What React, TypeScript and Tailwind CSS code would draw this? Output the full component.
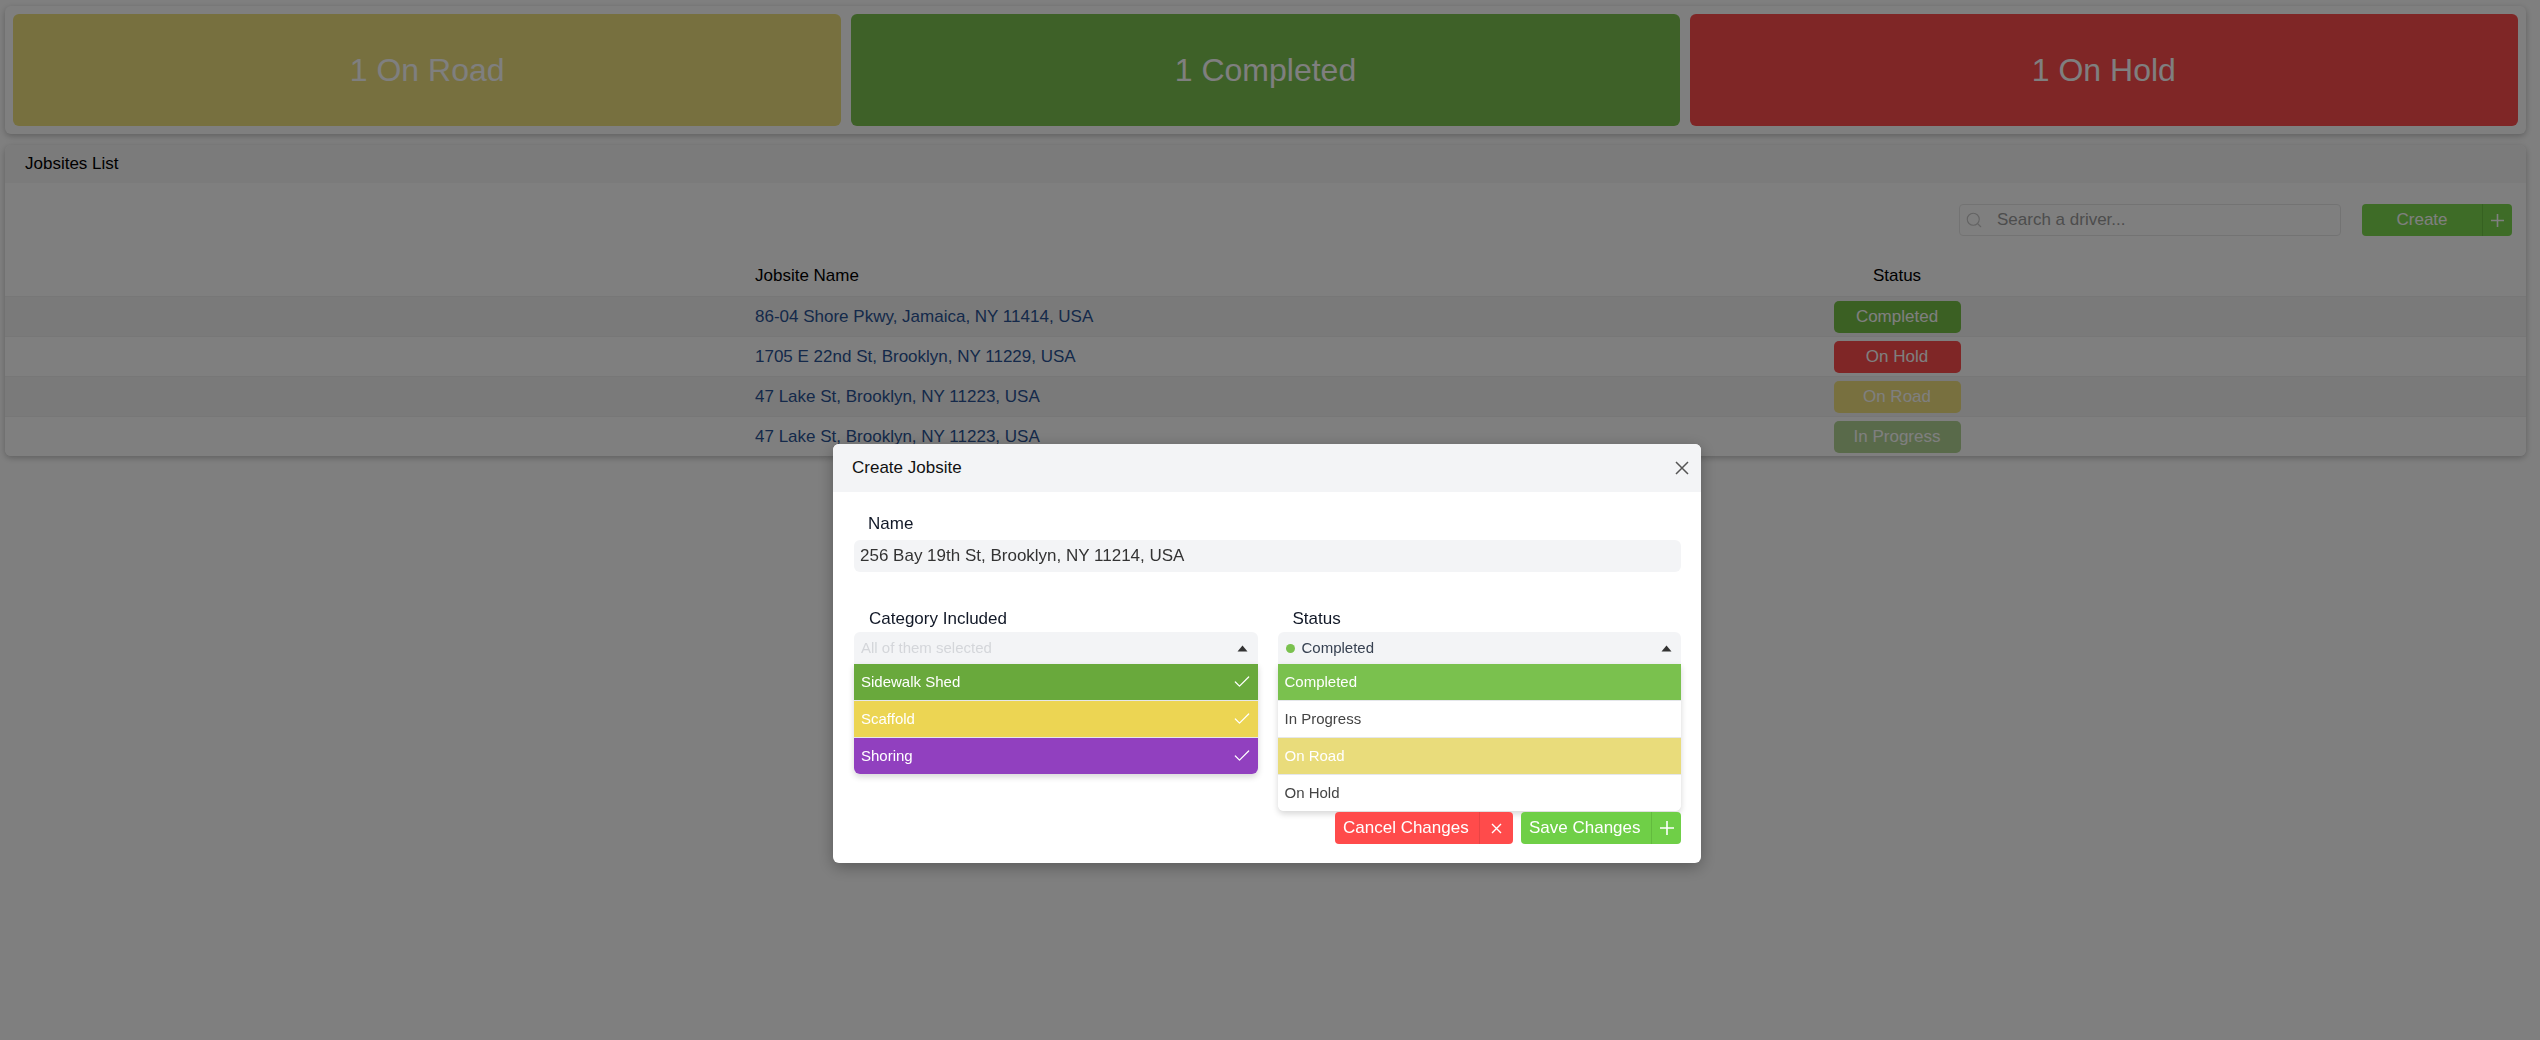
import { Check, Search } from 'lucide-react';

const SUMMARY = [
  { label: '1 On Road', color: 'bg-[#eee07e]' },
  { label: '1 Completed', color: 'bg-[#7cc250]' },
  { label: '1 On Hold', color: 'bg-[#fe4c4c]' },
];

const JOBSITES = [
  { name: '86-04 Shore Pkwy, Jamaica, NY 11414, USA', status: 'Completed', badge: 'bg-[#77c047]' },
  { name: '1705 E 22nd St, Brooklyn, NY 11229, USA', status: 'On Hold', badge: 'bg-[#fe4c4c]' },
  { name: '47 Lake St, Brooklyn, NY 11223, USA', status: 'On Road', badge: 'bg-[#f0e07e]' },
  { name: '47 Lake St, Brooklyn, NY 11223, USA', status: 'In Progress', badge: 'bg-[#b2d494]' },
];

const CATEGORIES = [
  { name: 'Sidewalk Shed', color: 'bg-[#69a93c]' },
  { name: 'Scaffold', color: 'bg-[#ecd553]' },
  { name: 'Shoring', color: 'bg-[#9140bf]' },
];

const STATUSES = [
  { name: 'Completed', color: 'bg-[#7ac14e] text-white' },
  { name: 'In Progress', color: 'bg-white text-[#444]' },
  { name: 'On Road', color: 'bg-[#e9dc7b] text-white' },
  { name: 'On Hold', color: 'bg-white text-[#444]' },
];

function CaretUp() {
  return (
    <svg width="11" height="7" viewBox="0 0 11 7" className="text-[#333]">
      <path d="M5.5 0.5 L10.5 6.5 L0.5 6.5 Z" fill="currentColor" strokeLinejoin="round" />
    </svg>
  );
}

function SummaryPanel() {
  return (
    <div className="grid grid-cols-3 gap-[10px] rounded-md bg-white p-[8px] shadow-[0_2px_6px_rgba(0,0,0,0.25)]">
      {SUMMARY.map((s) => (
        <div
          key={s.label}
          className={`flex h-[112px] items-center justify-center rounded-md text-[32px] text-white ${s.color}`}
        >
          {s.label}
        </div>
      ))}
    </div>
  );
}

function JobsitesPanel() {
  return (
    <div className="mt-[11px] overflow-hidden rounded-md bg-white shadow-[0_2px_6px_rgba(0,0,0,0.25)]">
      <div className="bg-[#f7f7f7] px-[20px] py-[9px] leading-[20px]">Jobsites List</div>

      <div className="pt-[21px]">
        <div className="flex justify-end gap-[21px] pr-[14px]">
          <div className="flex h-[32px] w-[382px] items-center gap-[14px] rounded-[4px] border border-[#e6e6e6] bg-white pl-[5px]">
            <Search size={18} strokeWidth={1.5} className="text-[#c8c8c8]" />
            <span className="text-[#9a9a9a]">Search a driver...</span>
          </div>
          <button className="flex h-[32px] w-[150px] overflow-hidden rounded-[4px] bg-[#7cd94e] text-white">
            <span className="flex flex-1 items-center justify-center">Create</span>
            <span className="flex w-[30px] items-center justify-center border-l border-[#6cc242]">
              <svg width="13" height="13" viewBox="0 0 13 13">
                <path d="M6.5 0 V13 M0 6.5 H13" stroke="white" strokeWidth="1.6" />
              </svg>
            </span>
          </button>
        </div>

        <div className="mt-[20px]">
          <div className="grid h-[40px] grid-cols-[740px_1052px_200px_1fr] items-center">
            <div />
            <div className="pl-[10px]">Jobsite Name</div>
            <div className="text-center">Status</div>
            <div />
          </div>
          {JOBSITES.map((j, i) => (
            <div
              key={i}
              className={`grid h-[40px] grid-cols-[740px_1052px_200px_1fr] items-center border-t border-[#efefef] ${
                i % 2 === 0 ? 'bg-[#f4f4f4]' : 'bg-white'
              }`}
            >
              <div />
              <div className="pl-[10px] text-[#2a5394]">{j.name}</div>
              <div className="flex justify-center">
                <span
                  className={`flex h-[32px] w-[127px] items-center justify-center rounded-[5px] text-white ${j.badge}`}
                >
                  {j.status}
                </span>
              </div>
              <div />
            </div>
          ))}
        </div>
      </div>
    </div>
  );
}

function CreateJobsiteModal() {
  return (
    <div className="fixed left-[833px] top-[444px] w-[868px] rounded-md bg-white shadow-[0_4px_16px_rgba(0,0,0,0.3)]">
      <div className="flex h-[48px] items-center justify-between rounded-t-md bg-[#f3f4f6] pl-[19px] pr-[12px]">
        <span className="leading-[20px] text-[#111]">Create Jobsite</span>
        <svg width="14" height="14" viewBox="0 0 14 14">
          <path d="M1 1 L13 13 M13 1 L1 13" stroke="#555" strokeWidth="1.5" />
        </svg>
      </div>

      <div className="pb-[19px] pl-[21px] pr-[20px] pt-[22px]">
        <div className="mb-[6px] pl-[14px] leading-[20px] text-[#111827]">Name</div>
        <div className="flex h-[32px] items-center rounded-md bg-[#f3f4f6] px-[6px] text-[#333]">
          256 Bay 19th St, Brooklyn, NY 11214, USA
        </div>

        <div className="mt-[37px] grid grid-cols-2 gap-[20px]">
          <div>
            <div className="mb-[3px] pl-[15px] leading-[20px] text-[#111827]">Category Included</div>
            <div className="flex h-[32px] items-center justify-between rounded-t-md bg-[#f3f4f6] pl-[7px] pr-[10px]">
              <span className="text-[15px] text-[#d4d6da]">All of them selected</span>
              <CaretUp />
            </div>
            <div className="overflow-hidden rounded-b-md shadow-[0_3px_6px_rgba(0,0,0,0.16)]">
              {CATEGORIES.map((c, i) => (
                <div
                  key={c.name}
                  className={`flex items-center justify-between pl-[7px] pr-[6px] text-[15px] text-white ${c.color} ${
                    i > 0 ? 'h-[37px] border-t border-[#e5e7eb]' : 'h-[36px]'
                  }`}
                >
                  {c.name}
                  <Check size={20} strokeWidth={1.5} />
                </div>
              ))}
            </div>
          </div>

          <div>
            <div className="mb-[3px] pl-[15px] leading-[20px] text-[#111827]">Status</div>
            <div className="flex h-[32px] items-center justify-between rounded-t-md bg-[#f3f4f6] pl-[8px] pr-[9px]">
              <span className="flex items-center gap-[7px] text-[15px] text-[#374151]">
                <span className="h-[9px] w-[9px] rounded-full bg-[#7ac14e]" />
                Completed
              </span>
              <CaretUp />
            </div>
            <div className="overflow-hidden rounded-b-md shadow-[0_3px_6px_rgba(0,0,0,0.16)]">
              {STATUSES.map((s, i) => (
                <div
                  key={s.name}
                  className={`flex items-center pl-[7px] text-[15px] ${s.color} ${
                    i > 0 ? 'h-[37px] border-t border-[#e5e7eb]' : 'h-[36px]'
                  }`}
                >
                  {s.name}
                </div>
              ))}
            </div>
          </div>
        </div>

        <div className="mt-[1px] flex justify-end gap-[8px]">
          <button className="flex h-[32px] w-[178px] overflow-hidden rounded-[4px] bg-[#ff4b4b] text-white">
            <span className="flex flex-1 items-center pl-[8px]">Cancel Changes</span>
            <span className="flex w-[34px] items-center justify-center border-l border-[#e84444]">
              <svg width="11" height="11" viewBox="0 0 11 11">
                <path d="M1 1 L10 10 M10 1 L1 10" stroke="white" strokeWidth="1.4" />
              </svg>
            </span>
          </button>
          <button className="flex h-[32px] w-[160px] overflow-hidden rounded-[4px] bg-[#6fcf47] text-white">
            <span className="flex flex-1 items-center pl-[8px]">Save Changes</span>
            <span className="flex w-[30px] items-center justify-center border-l border-[#62bb3e]">
              <svg width="14" height="14" viewBox="0 0 14 14">
                <path d="M7 0 V14 M0 7 H14" stroke="white" strokeWidth="1.6" />
              </svg>
            </span>
          </button>
        </div>
      </div>
    </div>
  );
}

export default function App() {
  return (
    <div className="relative min-h-[1040px] bg-white pl-[5px] pr-[14px] pt-[6px] font-['Liberation_Sans',Arial,sans-serif] text-[17px] text-black">
      <SummaryPanel />
      <JobsitesPanel />
      <div className="fixed inset-0 bg-black/50" />
      <CreateJobsiteModal />
    </div>
  );
}
